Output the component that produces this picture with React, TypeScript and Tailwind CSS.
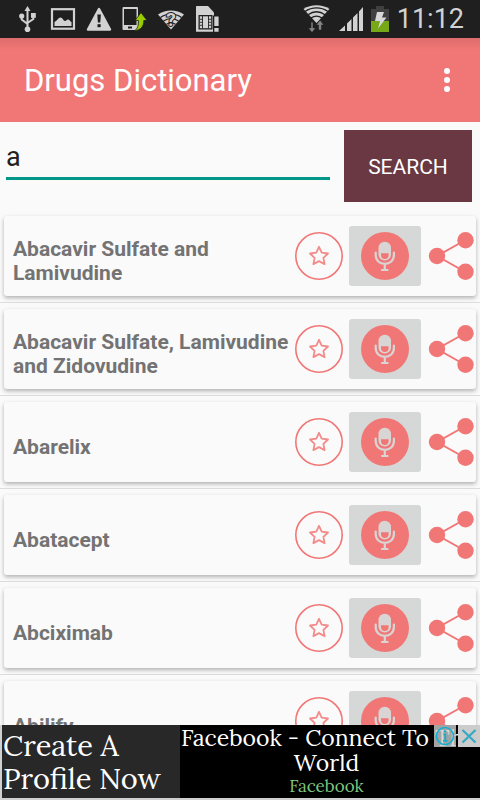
import React from 'react';

interface Drug {
  id: number;
  name: string;
}

const DRUGS: Drug[] = [
  { id: 1, name: 'Abacavir Sulfate and Lamivudine' },
  { id: 2, name: 'Abacavir Sulfate, Lamivudine and Zidovudine' },
  { id: 3, name: 'Abarelix' },
  { id: 4, name: 'Abatacept' },
  { id: 5, name: 'Abciximab' },
  { id: 6, name: 'Abilify' },
];

const StatusIcon: React.FC<{ children: React.ReactNode }> = ({ children }) => (
  <svg viewBox="0 0 28 28" className="w-7 h-7 shrink-0" fill="none" aria-hidden="true">{children}</svg>
);

const StatusBar: React.FC = () => (
  <div className="h-[38px] shrink-0 bg-[#1f1f1f] text-[#d2d2d2] flex items-center justify-between pl-[13px] pr-4">
    <div className="flex items-center gap-2">
      {/* USB */}
      <StatusIcon>
        <path d="M14.5 5v19M8.7 11v3.5l5.8 4.5M20.3 10v4l-5.8 4" stroke="currentColor" strokeWidth="2" />
        <path d="M14.5 1l3 5h-6z" fill="currentColor" />
        <circle cx="8.7" cy="11" r="2.6" fill="currentColor" />
        <rect x="18" y="8" width="4.8" height="4.8" fill="currentColor" />
        <circle cx="14.5" cy="24.3" r="2.8" fill="currentColor" />
      </StatusIcon>
      {/* Screenshot */}
      <StatusIcon>
        <rect x="3" y="4.2" width="22" height="19.5" stroke="currentColor" strokeWidth="2.2" />
        <path d="M5.5 21v-4c2-1 4-4.500 6-4.500 2 0 3 3.500 4.500 3.500s1.500-1.500 3-1.500 2 2 3.500 2.500V21z" fill="currentColor" />
      </StatusIcon>
      {/* Warning */}
      <StatusIcon>
        <path d="M14 4L25 24.500H3z" fill="currentColor" stroke="currentColor" strokeWidth="2.5" strokeLinejoin="round" />
        <path d="M12.300 9.500h3.600l-.6 8h-2.400z" fill="#1f1f1f" />
        <rect x="12.500" y="19.200" width="3.200" height="3" fill="#1f1f1f" />
      </StatusIcon>
      {/* Phone update */}
      <StatusIcon>
        <rect x="1.500" y="2" width="15.500" height="23" rx="1" fill="currentColor" />
        <rect x="3" y="4" width="12.500" height="16" fill="#1f1f1f" />
        <rect x="7" y="21.500" width="4" height="2" fill="#1f1f1f" />
        <path d="M20 7.500l6 8h-3.200c.2 5.500-2.800 9.500-9.300 10.500 3.300-2.500 4-5.500 3.800-10.500h-3.300z" fill="#99cc00" stroke="#1f1f1f" strokeWidth=".8" />
      </StatusIcon>
      {/* Unknown wifi */}
      <StatusIcon>
        <path d="M1 9.500C8.500 4 19.500 4 27 9.500L14 24.500z" fill="currentColor" />
        <path d="M3.500 12.500c6-4.500 15-4.500 21 0M6.500 16c4.500-3.200 10.500-3.200 15 0M9.500 19.300c3-2 6-2 9 0" stroke="#1f1f1f" strokeWidth="1.300" />
        <text x="14" y="21" textAnchor="middle" fontSize="19" fontWeight="700" fontFamily="Roboto, sans-serif" fill="currentColor" stroke="#1f1f1f" strokeWidth="2" paintOrder="stroke">?</text>
      </StatusIcon>
      {/* SIM alert */}
      <StatusIcon>
        <path d="M3 2c0-.6.400-1 1-1h11l6 6.500v19.200H3z" fill="currentColor" />
        <rect x="5.500" y="10" width="14" height="14.500" fill="#1f1f1f" />
        <path d="M6.800 11.300h11.400v11.900H6.800z" fill="currentColor" />
        <path d="M9.500 11v12.500M15.500 11v12.500M7 14.300h2.500M7 17.300h2.500M7 20.300h2.500M15.500 14.300H18M15.500 17.300H18M15.500 20.300H18" stroke="#1f1f1f" strokeWidth=".9" />
        <rect x="20" y="10.500" width="6.500" height="17" fill="#1f1f1f" />
        <path d="M21.300 11.500h4.300v9.500h-4.300zM21.300 23h4.300v3.700h-4.300z" fill="currentColor" />
      </StatusIcon>
    </div>
    <div className="flex items-center gap-2">
      {/* Wifi with traffic arrows */}
      <StatusIcon>
        <path d="M.5 4C8-1 19-1 26.500 4L13.500 18z" fill="currentColor" />
        <path d="M2 6.500c7-4.800 16-4.800 23 0M5 9.800c5.400-3.800 11.600-3.800 17 0M8 13c3.800-2.600 7.200-2.600 11 0" stroke="#1f1f1f" strokeWidth="1.400" />
        <path d="M10 17v6h2.800L9 27.500 5.200 23H8v-6zM15.500 25v-5h-2.300l3.800-5 3.800 5h-2.300v5z" fill="#858585" stroke="#1f1f1f" strokeWidth=".6" />
      </StatusIcon>
      <svg viewBox="0 0 24 28" className="w-6 h-7 shrink-0" fill="currentColor" aria-hidden="true">
        <path d="M0 26l6-5.500V26zM8 26v-7.500l4.500-4.500v12zM14 26V12.500L18.500 8v18zM20 26V6.500L24 2v24z" />
      </svg>
      <div className="flex items-center gap-2">
        <svg viewBox="0 0 18 28" className="w-[18px] h-7 shrink-0" aria-hidden="true">
          <path d="M0 4h5V1h8v3h5v12H0z" fill="#404040" />
          <path d="M0 16h18v11H0z" fill="#76a817" />
          <path d="M6 7h7l-2 5.500h4.500L7 23.500l2-7.500H4z" fill="#d8d8d8" />
        </svg>
        <span className="text-[27px] leading-[38px]">11:12</span>
      </div>
    </div>
  </div>
);

const AppHeader: React.FC = () => (
  <header className="h-[84px] shrink-0 bg-linear-to-b from-[#dd6d6c] to-[#f17776] to-[12px] text-white flex items-center justify-between pl-6 pr-6">
    <h1 className="pt-[2px] text-[31px] leading-9 font-normal">Drugs Dictionary</h1>
    <button type="button" aria-label="More options" className="w-[18px] h-12 flex items-center justify-center">
      <svg viewBox="0 0 6 24" className="w-[6px] h-6" fill="currentColor" aria-hidden="true">
        <circle cx="3" cy="3" r="3" />
        <circle cx="3" cy="12" r="3" />
        <circle cx="3" cy="21" r="3" />
      </svg>
    </button>
  </header>
);

const SearchBar: React.FC = () => (
  <form className="shrink-0 flex items-start gap-[14px] pl-[6px] pr-2 py-2" onSubmit={(e) => e.preventDefault()}>
    <input
      type="text"
      aria-label="Drug name"
      defaultValue="a"
      className="min-w-0 flex-1 h-[50px] pt-[6px] bg-transparent border-b-[3px] border-[#009688] text-[27px] text-[#212121] outline-none"
    />
    <button type="submit" className="w-32 h-[72px] shrink-0 pt-1 bg-[#693842] text-white text-[21px]">SEARCH</button>
  </form>
);

const DrugRow: React.FC<{ drug: Drug }> = ({ drug }) => (
  <li className="border-b border-[#dcdcdc] px-1 py-[6px]">
    <div className="h-20 bg-[#fafafa] rounded-[3px] shadow-[0_2px_4px_rgba(0,0,0,0.3)] flex items-center pl-[9px] pr-px">
      <h2 className="min-w-0 flex-1 pt-[10px] text-[21px] leading-6 font-bold text-[#737373]">{drug.name}</h2>
      <div className="shrink-0 flex items-center gap-[6px] text-[#f17776]">
        <button type="button" aria-label={`Add ${drug.name} to favourites`}>
          <svg viewBox="0 0 48 48" className="block w-12 h-12" fill="none" stroke="currentColor" aria-hidden="true">
            <circle cx="24" cy="24" r="23.200" strokeWidth="1.600" />
            <path d="M24 14.800l2.700 5.900 6.300.8-4.600 4.300 1.200 6.300-5.600-3-5.600 3 1.200-6.300-4.600-4.300 6.300-.8z" strokeWidth="1.800" strokeLinejoin="round" opacity=".85" />
          </svg>
        </button>
        <button type="button" aria-label={`Pronounce ${drug.name}`} className="w-[72px] h-[60px] rounded-[3px] bg-[#d6d8d7] flex items-center justify-center">
          <svg viewBox="0 0 48 48" className="w-12 h-12" fill="none" aria-hidden="true">
            <circle cx="24" cy="24" r="24" fill="currentColor" />
            <rect x="17.500" y="9.800" width="12.500" height="18.800" rx="6.200" fill="#d9d5d4" />
            <path d="M20 21.300h7.600v1.700c0 2.700-1.500 4-3.800 4s-3.800-1.300-3.800-4z" fill="currentColor" />
            <path d="M14.700 20.500v2.500c0 5.500 4 8.800 9.100 8.800s9.100-3.300 9.100-8.800v-2.500M23.800 32v5.500M21 38h5.600" stroke="#d9d5d4" strokeWidth="2.200" strokeLinecap="round" />
          </svg>
        </button>
        <button type="button" aria-label={`Share ${drug.name}`}>
          <svg viewBox="0 0 48 48" className="block w-12 h-12" fill="currentColor" aria-hidden="true">
            <path d="M38.500 8L10 24l28.500 16" fill="none" stroke="currentColor" strokeWidth="2" />
            <circle cx="10" cy="24" r="8.200" />
            <circle cx="38.500" cy="8.200" r="8.200" />
            <circle cx="38.500" cy="39.800" r="8.200" />
          </svg>
        </button>
      </div>
    </div>
  </li>
);

const AdBanner: React.FC = () => (
  <aside className="relative h-[75px] shrink-0 flex pl-[2px] pb-[2px] bg-[#d0d0d0] text-white font-['Lora','Liberation_Serif',serif]">
    <a href="#profile" className="w-[178px] shrink-0 bg-[#282828] pl-px pt-1 text-[29px] leading-[33px] whitespace-nowrap">
      Create A<br />Profile Now
    </a>
    <a href="#facebook" className="flex-1 min-w-0 bg-black pl-px pr-2 text-center">
      <span className="block text-[23px] leading-[25px] whitespace-nowrap">Facebook - Connect To The<br />World</span>
      <span className="block text-[17px] leading-[22px] text-[#7dc67d]">Facebook</span>
    </a>
    {/* Ad controls sit on top of the headline */}
    <div className="absolute top-0 right-0 flex gap-[2px]">
      <button type="button" aria-label="Ad information" className="w-[22px] h-[22px] bg-[#cccccc]/80">
        <svg viewBox="0 0 22 22" className="w-full h-full" fill="none" stroke="#10b0d0" aria-hidden="true">
          <circle cx="11" cy="11" r="8.500" strokeWidth="1.600" />
          <path d="M9.300 9.300h2v6M9 15.800h4.500" strokeWidth="1.800" />
          <circle cx="11" cy="6.300" r=".8" strokeWidth="1" fill="#10b0d0" />
        </svg>
      </button>
      <button type="button" aria-label="Close ad" className="w-[22px] h-[22px] bg-[#cccccc]">
        <svg viewBox="0 0 22 22" className="w-full h-full" fill="none" stroke="#35a9c4" strokeWidth="2.200" aria-hidden="true">
          <path d="M4.500 5l13 12.500M17.500 5l-13 12.500" />
        </svg>
      </button>
    </div>
  </aside>
);

const App: React.FC = () => {
  return (
    <div className="h-screen flex flex-col overflow-hidden bg-[#fafafa] font-['Roboto',sans-serif]">
      <StatusBar />
      <AppHeader />
      <SearchBar />
      <ul className="flex-1 min-h-0 overflow-hidden">
        {DRUGS.map((drug) => (
          <DrugRow key={drug.id} drug={drug} />
        ))}
      </ul>
      <AdBanner />
    </div>
  );
};

export default App;
